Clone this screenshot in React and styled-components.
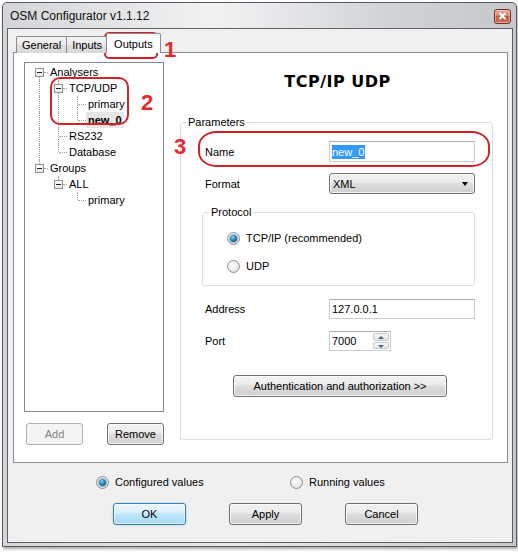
import styled, { createGlobalStyle } from "styled-components";

const GlobalStyle = createGlobalStyle`
  html, body {
    margin: 0;
    padding: 0;
    background: #ffffff;
  }
  body {
    font-family: "Liberation Sans", Arial, sans-serif;
    font-size: 11px;
    color: #000;
  }
  * {
    box-sizing: border-box;
  }
`;

const treeRows = [
  { label: "Analysers", guides: [], toggle: true, first: true },
  { label: "TCP/UDP", guides: [true], toggle: true },
  { label: "primary", guides: [true, true] },
  { label: "new_0", guides: [true, true], last: true, bold: true, selected: true },
  { label: "RS232", guides: [true] },
  { label: "Database", guides: [true], last: true },
  { label: "Groups", guides: [], toggle: true, last: true },
  { label: "ALL", guides: [false], toggle: true, last: true },
  { label: "primary", guides: [false, false], last: true },
];

const App = () => {
  return (
    <Stage>
      <GlobalStyle />
      <Window>
        <TitleBar>
          <TitleText>OSM Configurator v1.1.12</TitleText>
          <CloseButton>
            <svg width="9" height="8" viewBox="0 0 9 8">
              <path d="M1.5 1 L7.5 7 M7.5 1 L1.5 7" stroke="#fff" strokeWidth="2" />
            </svg>
          </CloseButton>
        </TitleBar>
        <Client>
          <TabStrip>
            <Tab>General</Tab>
            <Tab>Inputs</Tab>
            <Tab $active>Outputs</Tab>
          </TabStrip>
          <TabPanel>
            <LeftCol>
              <Tree>
                {treeRows.map((row, i) => (
                  <TreeRow key={i}>
                    {row.guides.map((on, j) => (
                      <Guide key={j} $on={on} />
                    ))}
                    <Connector $first={row.first} $last={row.last} $toggle={row.toggle}>
                      {row.toggle && <Expander />}
                    </Connector>
                    <NodeLabel $bold={row.bold} $selected={row.selected}>
                      {row.label}
                    </NodeLabel>
                  </TreeRow>
                ))}
              </Tree>
              <TreeButtons>
                <Button $w={57} disabled>
                  Add
                </Button>
                <Button $w={57}>Remove</Button>
              </TreeButtons>
            </LeftCol>
            <RightCol>
              <PanelTitle>TCP/IP UDP</PanelTitle>
              <GroupBox $h={325}>
                <Legend>Parameters</Legend>
                <Form>
                  <Field>
                    <FieldLabel>Name</FieldLabel>
                    <TextBox $w={146} $h={21}>
                      <Selected>new_0</Selected>
                    </TextBox>
                  </Field>
                  <Field>
                    <FieldLabel>Format</FieldLabel>
                    <Combo>
                      XML
                      <ComboArrow />
                    </Combo>
                  </Field>
                  <ProtocolBox>
                    <Legend>Protocol</Legend>
                    <RadioList>
                      <RadioItem>
                        <RadioDot $checked />
                        TCP/IP (recommended)
                      </RadioItem>
                      <RadioItem>
                        <RadioDot />
                        UDP
                      </RadioItem>
                    </RadioList>
                  </ProtocolBox>
                  <Field $gap={13}>
                    <FieldLabel>Address</FieldLabel>
                    <TextBox $w={146} $h={20}>127.0.0.1</TextBox>
                  </Field>
                  <Field $gap={12}>
                    <FieldLabel>Port</FieldLabel>
                    <TextBox $w={62} $h={20}>
                      7000
                      <SpinButtons>
                        <SpinButton $up />
                        <SpinButton />
                      </SpinButtons>
                    </TextBox>
                  </Field>
                  <AuthButton $w={214}>Authentication and authorization &gt;&gt;</AuthButton>
                </Form>
              </GroupBox>
            </RightCol>
          </TabPanel>
          <ValueRow>
            <ValueItem>
              <RadioDot $checked />
              Configured values
            </ValueItem>
            <ValueItem>
              <RadioDot />
              Running values
            </ValueItem>
          </ValueRow>
          <DialogButtons>
            <Button $w={73} $default>
              OK
            </Button>
            <Button $w={73}>Apply</Button>
            <Button $w={73}>Cancel</Button>
          </DialogButtons>
        </Client>
      </Window>

      <Mark $x={104} $y={32} $w={54} $h={27} $r="5px" />
      <Number $x={164} $y={39}>1</Number>
      <Mark $x={50} $y={77} $w={79} $h={48} $r="10px" />
      <Number $x={141} $y={92}>2</Number>
      <Number $x={174} $y={136}>3</Number>
      <Mark $x={198} $y={131} $w={292} $h={36} $r="18px / 15px" />
    </Stage>
  );
};

export default App;

const Stage = styled.div`
  position: relative;
  width: 518px;
  height: 552px;
  overflow: hidden;
`;

const Window = styled.div`
  margin: 2px 0 0 2px;
  width: 515px;
  height: 545px;
  border: 1px solid #555b61;
  border-radius: 5px 5px 0 0;
  background: linear-gradient(to right, #d4d6d9, #e9eaeb 45%, #d2d4d6 80%, #c6c8cb);
  padding: 0 3px 3px 4px;
  display: flex;
  flex-direction: column;
  box-shadow: 1px 2px 3px rgba(0, 0, 0, 0.35);
`;

const TitleBar = styled.div`
  height: 25px;
  display: flex;
  align-items: center;
  justify-content: space-between;
  padding: 0 2px 0 3px;
  background: linear-gradient(
    to right,
    rgba(210, 212, 215, 0.6),
    rgba(245, 245, 246, 0.7) 40%,
    rgba(205, 207, 210, 0.5) 75%,
    rgba(196, 198, 201, 0.5)
  );
`;

const TitleText = styled.span`
  font-size: 12px;
  color: #111;
  margin-top: 1px;
`;

const CloseButton = styled.span`
  width: 17px;
  height: 15px;
  margin-top: 1px;
  border: 1px solid #6e3329;
  border-radius: 3px;
  background: linear-gradient(#e9ab9b, #d9806c 45%, #c65840 50%, #cf6f55);
  box-shadow: inset 0 0 0 1px rgba(255, 220, 210, 0.5);
  display: flex;
  align-items: center;
  justify-content: center;
`;

const Client = styled.div`
  flex: 1;
  border: 1px solid #5c6166;
  background: #f0f0f0;
  display: flex;
  flex-direction: column;
  padding: 4px 4px 0 5px;
`;

const TabStrip = styled.div`
  display: flex;
  align-items: flex-end;
  height: 20px;
  padding-left: 3px;
  margin-bottom: -1px;
  position: relative;
  z-index: 1;
`;

const Tab = styled.div`
  height: ${(p) => (p.$active ? "20px" : "17px")};
  padding: 0 ${(p) => (p.$active ? "7px" : "5px")};
  margin: 0 ${(p) => (p.$active ? "-2px" : "0")} 0 ${(p) => (p.$active ? "-2px" : "-1px")};
  border: 1px solid #898c95;
  border-bottom: none;
  border-radius: 2px 2px 0 0;
  background: ${(p) => (p.$active ? "#ffffff" : "linear-gradient(#f5f5f5, #e9e9e9 50%, #dfdfdf 51%, #d9d9d9)")};
  display: flex;
  align-items: center;
  font-size: 11px;
  &:first-child {
    margin-left: 0;
  }
`;

const TabPanel = styled.div`
  width: 495px;
  height: 411px;
  border: 1px solid #898c95;
  background: #ffffff;
  display: flex;
  padding: 9px 0 0 10px;
`;

const LeftCol = styled.div`
  width: 140px;
  display: flex;
  flex-direction: column;
`;

const Tree = styled.div`
  height: 350px;
  border: 1px solid #828790;
  padding-top: 1px;
  background: #fff;
`;

const TreeRow = styled.div`
  display: flex;
  height: 16px;
`;

const dotted = "1px dotted #a0a0a0";

const Guide = styled.span`
  width: 19px;
  flex: none;
  position: relative;
  &::before {
    content: "";
    display: ${(p) => (p.$on ? "block" : "none")};
    position: absolute;
    left: 14px;
    top: 0;
    bottom: 0;
    border-left: ${dotted};
  }
`;

const Connector = styled.span`
  width: 23px;
  flex: none;
  position: relative;
  &::before {
    content: "";
    position: absolute;
    left: 14px;
    top: ${(p) => (p.$first ? "8px" : "0")};
    bottom: ${(p) => (p.$last ? "8px" : "0")};
    border-left: ${dotted};
  }
  &::after {
    content: "";
    position: absolute;
    left: ${(p) => (p.$toggle ? "19px" : "15px")};
    right: 0;
    top: 8px;
    border-top: ${dotted};
  }
`;

const Expander = styled.span`
  position: absolute;
  left: 10px;
  top: 4px;
  width: 9px;
  height: 9px;
  border: 1px solid #919191;
  background: linear-gradient(#ffffff, #e8e8e8);
  &::after {
    content: "";
    position: absolute;
    left: 1px;
    top: 3px;
    width: 5px;
    height: 1px;
    background: #1e1e1e;
  }
`;

const NodeLabel = styled.span`
  line-height: 16px;
  padding: 0 2px;
  white-space: nowrap;
  font-weight: ${(p) => (p.$bold ? "bold" : "normal")};
  background: ${(p) => (p.$selected ? "#e6e6e6" : "transparent")};
`;

const TreeButtons = styled.div`
  margin-top: 11px;
  padding-left: 2px;
  display: flex;
  justify-content: space-between;
`;

const Button = styled.button`
  font-family: "Liberation Sans", Arial, sans-serif;
  font-size: 11px;
  width: ${(p) => p.$w}px;
  height: 22px;
  padding: 0;
  color: #000;
  border: 1px solid #707070;
  border-radius: 3px;
  background: linear-gradient(#f2f2f2, #ebebeb 45%, #dddddd 50%, #cfcfcf);
  box-shadow: inset 0 0 0 1px rgba(255, 255, 255, 0.75);
  ${(p) =>
    p.$default &&
    `
    border-color: #3c7fb1;
    background: linear-gradient(#eaf6fd, #d9f0fc 45%, #bee6fd 50%, #a7d9f5);
    box-shadow: inset 0 0 0 1px rgba(255, 255, 255, 0.6), 0 0 2px #7ac8ec;
  `}
  &:disabled {
    color: #838383;
    border-color: #adb2b5;
    background: #f4f4f4;
    box-shadow: none;
  }
`;

const RightCol = styled.div`
  margin-left: 16px;
  width: 313px;
  display: flex;
  flex-direction: column;
`;

const PanelTitle = styled.div`
  margin-top: 10px;
  height: 20px;
  line-height: 20px;
  text-align: center;
  padding-left: 2px;
  font-family: "DejaVu Sans", Verdana, sans-serif;
  font-weight: bold;
  font-size: 16px;
  letter-spacing: 0.5px;
  margin-bottom: 23px;
`;

const GroupBox = styled.fieldset`
  margin: 0;
  min-width: 0;
  height: ${(p) => p.$h}px;
  border: 1px solid #d5dfe5;
  border-radius: 3px;
  padding: 12px 0 0 5px;
`;

const Legend = styled.legend`
  padding: 0 2px;
  line-height: 14px;
  font-size: 11px;
`;

const Form = styled.div`
  margin-left: 19px;
  width: 270px;
  display: flex;
  flex-direction: column;
`;

const Field = styled.div`
  display: flex;
  align-items: center;
  margin-top: ${(p) => (p.$gap !== undefined ? p.$gap : 11)}px;
  &:first-child {
    margin-top: 0;
  }
`;

const FieldLabel = styled.span`
  width: 124px;
`;

const TextBox = styled.div`
  position: relative;
  width: ${(p) => p.$w}px;
  height: ${(p) => p.$h}px;
  border: 1px solid #c9ced5;
  border-top-color: #abadb3;
  background: #fff;
  padding-left: 2px;
  display: flex;
  align-items: center;
  font-size: 11px;
`;

const Selected = styled.span`
  background: #3399ff;
  color: #fff;
  line-height: 14px;
  padding-right: 1px;
`;

const Combo = styled.div`
  position: relative;
  width: 146px;
  height: 21px;
  border: 1px solid #707070;
  border-radius: 3px;
  background: linear-gradient(#f2f2f2, #ebebeb 45%, #dddddd 50%, #cfcfcf);
  box-shadow: inset 0 0 0 1px rgba(255, 255, 255, 0.7);
  padding-left: 3px;
  display: flex;
  align-items: center;
`;

const ComboArrow = styled.span`
  position: absolute;
  right: 6px;
  top: 8px;
  border-left: 3.5px solid transparent;
  border-right: 3.5px solid transparent;
  border-top: 4px solid #000;
`;

const ProtocolBox = styled.fieldset`
  margin: 11px 0 0 -3px;
  min-width: 0;
  width: 273px;
  height: 81px;
  border: 1px solid #d5dfe5;
  border-radius: 3px;
  padding: 11px 0 0 6px;
`;

const RadioList = styled.div`
  margin-left: 18px;
  display: flex;
  flex-direction: column;
  gap: 12px;
`;

const RadioItem = styled.div`
  display: flex;
  align-items: center;
  height: 16px;
  gap: 6px;
`;

const RadioDot = styled.span`
  width: 13px;
  height: 13px;
  flex: none;
  border-radius: 50%;
  border: 1px solid #8e8f8f;
  background: radial-gradient(circle at 45% 40%, #ffffff, #eeeeee 45%, #d0d0d0);
  display: flex;
  align-items: center;
  justify-content: center;
  &::after {
    content: "";
    display: ${(p) => (p.$checked ? "block" : "none")};
    width: 7px;
    height: 7px;
    border-radius: 50%;
    background: radial-gradient(circle at 40% 35%, #7fd3f0, #1d7fae 50%, #0b4466);
    box-shadow: 0 0 0 1px rgba(20, 80, 120, 0.35);
  }
`;

const SpinButtons = styled.span`
  position: absolute;
  right: 1px;
  top: 1px;
  bottom: 1px;
  width: 16px;
  display: flex;
  flex-direction: column;
  gap: 1px;
`;

const SpinButton = styled.span`
  flex: 1;
  position: relative;
  border: 1px solid #c6ccd6;
  border-radius: 2px;
  background: linear-gradient(#f7f7f7, #e6e6e6);
  &::after {
    content: "";
    position: absolute;
    left: 4px;
    top: 2px;
    border-left: 3px solid transparent;
    border-right: 3px solid transparent;
    ${(p) => (p.$up ? "border-bottom: 3px solid #4d6185;" : "border-top: 3px solid #4d6185;")}
  }
`;

const AuthButton = styled(Button)`
  align-self: center;
  margin-top: 24px;
`;

const ValueRow = styled.div`
  margin-top: 11px;
  padding-left: 83px;
  height: 16px;
  display: grid;
  grid-template-columns: 194px auto;
  align-items: center;
`;

const ValueItem = styled.div`
  display: flex;
  align-items: center;
  gap: 6px;
`;

const DialogButtons = styled.div`
  margin-top: 13px;
  padding-left: 100px;
  display: flex;
  gap: 43px;
`;

const Mark = styled.div`
  position: absolute;
  left: ${(p) => p.$x}px;
  top: ${(p) => p.$y}px;
  width: ${(p) => p.$w}px;
  height: ${(p) => p.$h}px;
  border: 2px solid #d2232b;
  border-radius: ${(p) => p.$r};
  pointer-events: none;
`;

const Number = styled.div`
  position: absolute;
  left: ${(p) => p.$x}px;
  top: ${(p) => p.$y}px;
  font-family: "Liberation Sans", Arial, sans-serif;
  font-weight: bold;
  font-size: 22px;
  line-height: 22px;
  color: #e5262c;
`;
